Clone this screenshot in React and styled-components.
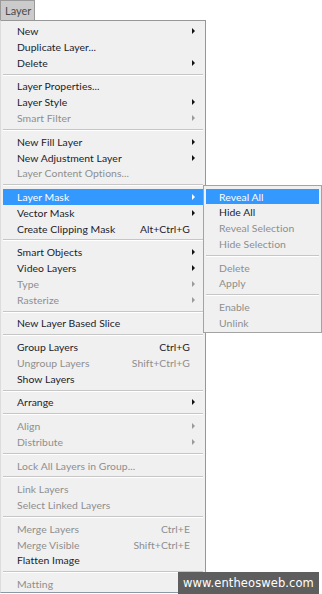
import React from 'react';
import styled, { createGlobalStyle } from 'styled-components';

const GlobalStyle = createGlobalStyle`
  html, body {
    margin: 0;
    padding: 0;
    background: #ffffff;
  }
  body {
    font-family: Lato, "Noto Sans", sans-serif;
  }
`;

const ROW = 15.8;
const SEP = 7.9;

const Page = styled.div`
  position: relative;
  width: 322px;
  height: 594px;
  overflow: hidden;
  background: #fff;
`;

const Tab = styled.div`
  width: 35px;
  height: 20px;
  box-sizing: border-box;
  background: #cbcbcb;
  border: 1px solid #9a9a9a;
  border-bottom: none;
  color: #4b4b4b;
  font-size: 11px;
  line-height: 20px;
  padding-left: 4px;
`;

const Menu = styled.div`
  position: relative;
  width: 206px;
  box-sizing: border-box;
  background: #f0f0f0;
  border: 1px solid #979797;
  border-left-color: #dcdcdc;
  border-bottom-color: #8b98a6;
  padding: 2.3px 2px 0 2px;
`;

const Row = styled.div`
  position: relative;
  display: flex;
  align-items: center;
  height: ${ROW}px;
  padding: 0 9px 0 14px;
  font-size: 10.4px;
  letter-spacing: 0.05px;
  color: ${p => (p.$active ? '#ffffff' : p.$disabled ? '#8e8e8e' : '#1b1b2b')};
  background: ${p => (p.$active ? '#3399ff' : 'transparent')};
  white-space: nowrap;
`;

const Label = styled.span`
  flex: 1;
`;

const Shortcut = styled.span`
  margin-right: 4px;
`;

const Arrow = styled.span`
  width: 0;
  height: 0;
  border-top: 3px solid transparent;
  border-bottom: 3px solid transparent;
  border-left: 3.5px solid ${p => (p.$active ? '#ffffff' : p.$disabled ? '#9a9a9a' : '#111111')};
  margin-right: -1px;
`;

const Separator = styled.div`
  height: ${SEP}px;
  display: flex;
  align-items: center;
  &::before {
    content: '';
    display: block;
    width: 100%;
    height: 1px;
    background: #c6c6c6;
    border-bottom: 1px solid #ffffff;
  }
`;

const Submenu = styled.div`
  position: absolute;
  left: 200px;
  top: -4px;
  width: 119px;
  box-sizing: border-box;
  background: #f0f0f0;
  border: 1px solid #a3a3a3;
  padding: 2.5px 2px 1px 2px;
  z-index: 2;
`;

const SubRow = styled(Row)`
  padding-left: 13px;
`;

const Watermark = styled.div`
  position: absolute;
  left: 178px;
  top: 572px;
  width: 141px;
  height: 22px;
  background: #5e5e5e;
  color: #ffffff;
  font-family: "DejaVu Sans", sans-serif;
  font-size: 11.5px;
  line-height: 22px;
  letter-spacing: 0.1px;
  text-align: center;
`;

const groups = [
  [
    { t: 'New', sub: true },
    { t: 'Duplicate Layer...' },
    { t: 'Delete', sub: true },
  ],
  [
    { t: 'Layer Properties...' },
    { t: 'Layer Style', sub: true },
    { t: 'Smart Filter', sub: true, off: true },
  ],
  [
    { t: 'New Fill Layer', sub: true },
    { t: 'New Adjustment Layer', sub: true },
    { t: 'Layer Content Options...', off: true },
  ],
  [
    { t: 'Layer Mask', sub: true, active: true, flyout: true },
    { t: 'Vector Mask', sub: true },
    { t: 'Create Clipping Mask', key: 'Alt+Ctrl+G' },
  ],
  [
    { t: 'Smart Objects', sub: true },
    { t: 'Video Layers', sub: true },
    { t: 'Type', sub: true, off: true },
    { t: 'Rasterize', sub: true, off: true },
  ],
  [{ t: 'New Layer Based Slice' }],
  [
    { t: 'Group Layers', key: 'Ctrl+G' },
    { t: 'Ungroup Layers', key: 'Shift+Ctrl+G', off: true },
    { t: 'Show Layers' },
  ],
  [{ t: 'Arrange', sub: true }],
  [
    { t: 'Align', sub: true, off: true },
    { t: 'Distribute', sub: true, off: true },
  ],
  [{ t: 'Lock All Layers in Group...', off: true }],
  [
    { t: 'Link Layers', off: true },
    { t: 'Select Linked Layers', off: true },
  ],
  [
    { t: 'Merge Layers', key: 'Ctrl+E', off: true },
    { t: 'Merge Visible', key: 'Shift+Ctrl+E', off: true },
    { t: 'Flatten Image' },
  ],
  [{ t: 'Matting', off: true }],
];

const maskItems = [
  [
    { t: 'Reveal All', active: true },
    { t: 'Hide All' },
    { t: 'Reveal Selection', off: true },
    { t: 'Hide Selection', off: true },
  ],
  [
    { t: 'Delete', off: true },
    { t: 'Apply', off: true },
  ],
  [
    { t: 'Enable', off: true },
    { t: 'Unlink', off: true },
  ],
];

const MaskSubmenu = () => (
  <Submenu>
    {maskItems.map((g, gi) => (
      <React.Fragment key={gi}>
        {gi > 0 && <Separator />}
        {g.map(it => (
          <SubRow key={it.t} $active={it.active} $disabled={it.off}>
            <Label>{it.t}</Label>
          </SubRow>
        ))}
      </React.Fragment>
    ))}
  </Submenu>
);

const MenuItem = ({ it }) => (
  <Row $active={it.active} $disabled={it.off}>
    <Label>{it.t}</Label>
    {it.key && <Shortcut>{it.key}</Shortcut>}
    {it.sub && <Arrow $active={it.active} $disabled={it.off} />}
    {it.flyout && <MaskSubmenu />}
  </Row>
);

const App = () => (
  <Page>
    <GlobalStyle />
    <Tab>Layer</Tab>
    <Menu>
      {groups.map((g, gi) => (
        <React.Fragment key={gi}>
          {gi > 0 && <Separator />}
          {g.map(it => (
            <MenuItem key={it.t} it={it} />
          ))}
        </React.Fragment>
      ))}
    </Menu>
    <Watermark>www.entheosweb.com</Watermark>
  </Page>
);

export default App;
